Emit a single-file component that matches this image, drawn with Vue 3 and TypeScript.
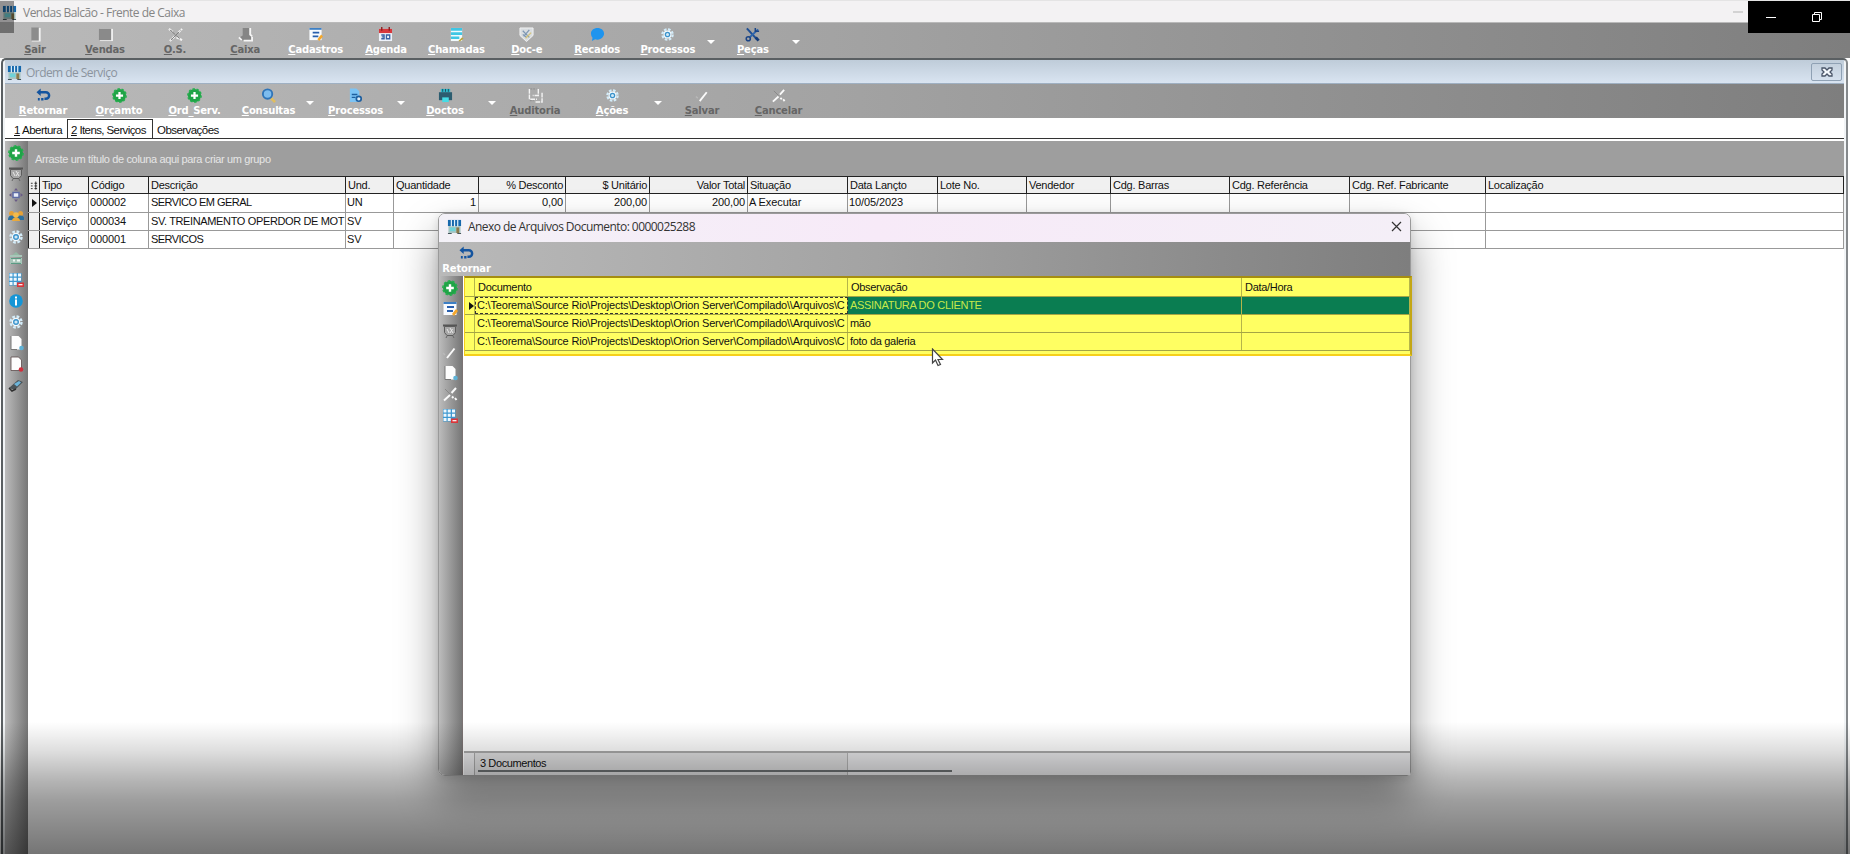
<template>
  <div class="screen">
    <svg class="sprite" width="0" height="0">
      <symbol id="i-shop" viewBox="0 0 16 16">
        <path d="M1.500 7h13v8h-13z" fill="#a9c4c2" />
        <path d="M3 9h6v4H3z" fill="#6fd3d8" />
        <path d="M10 9h3v6h-3z" fill="#8a7a4c" />
        <path d="M1 1h14v6.500H1z" fill="#1668ac" />
        <path d="M4 1h1.300v7H4zM7.400 1h1.300v7H7.400zM10.800 1h1.300v7h-1.300z" fill="#e2f1fa" />
        <path d="M1 15.500h4M11 15.500h4" stroke="#33424a" />
      </symbol>
      <symbol id="i-door" viewBox="0 0 16 16">
        <path d="M4 1h9.500v14.500H4z" fill="#f1f1f1" />
        <path d="M3.500 .5h8v14h-8z" fill="#8c8c8c" />
      </symbol>
      <symbol id="i-box" viewBox="0 0 16 16">
        <path d="M2 2h14v13H2z" fill="#eee" />
        <path d="M1 2h13v12H1z" fill="#8a8a8a" />
      </symbol>
      <symbol id="i-tools-off" viewBox="0 0 16 16">
        <path d="M2 15L9 8M11 6l4-4M1 2l4 3M9 11l6 3" stroke="#f4f4f4" stroke-width="2.200" fill="none" stroke-dasharray="3 1" />
        <path d="M3 14L12 5M2 3l10 9" stroke="#777" stroke-width="1" />
      </symbol>
      <symbol id="i-cash-off" viewBox="0 0 16 16">
        <path d="M5 1h8v6l2 2v5H2v-3l3-2z" fill="#858585" />
        <path d="M13 1v7l2 2M1 11l3 3M6 14.500h9v-4" stroke="#f5f5f5" stroke-width="2" fill="none" />
      </symbol>
      <symbol id="i-card" viewBox="0 0 16 16">
        <path d="M1.500 1h13v13h-13z" fill="#f8fbff" />
        <path d="M1.500 1h13v2h-13z" fill="#3d7fc4" />
        <path d="M5 6h7M5 10h6" stroke="#285fae" stroke-width="2" />
        <path d="M10 13l4-5 2 2-4 5z" fill="#f4a72c" />
      </symbol>
      <symbol id="i-calendar" viewBox="0 0 16 16">
        <path d="M1 2h14v13H1z" fill="#eef3fb" />
        <path d="M1 2h14v4.500H1z" fill="#d8373c" />
        <path d="M4 0v4M12 0v4" stroke="#8f2020" stroke-width="1.500" />
        <path d="M3.500 8.500h3v4h-3M4 10.500h2M9 8.500h3.500v4H9z" stroke="#3a62a5" stroke-width="1.400" fill="none" />
      </symbol>
      <symbol id="i-list" viewBox="0 0 16 16">
        <path d="M2 1h12v14H2z" fill="#f1fafc" />
        <path d="M2 2.500h12M2 7h12M2 11.500h9" stroke="#3fc6e4" stroke-width="2.800" />
        <path d="M10 15l4-4 1.500 1.500-4 3z" fill="#b9a53d" />
      </symbol>
      <symbol id="i-doce" viewBox="0 0 16 16">
        <path d="M1 1h14v8l-7 6.500L1 9z" fill="#d9dde0" stroke="#f2f2f2" />
        <path d="M4 4l7 7M11 3L5 10M4 8l4 3" stroke="#7d97b3" stroke-width="1.300" />
        <path d="M7 12l6-6" stroke="#d4c47c" stroke-width="1.500" />
      </symbol>
      <symbol id="i-chat" viewBox="0 0 16 16">
        <path d="M8 1c4 0 7 2.500 7 6s-3 6.500-7 6.500q-1.500 0-2.500-.4L2 15l.7-3.500Q1 9.500 1 7c0-3.500 3-6 7-6z" fill="#1e94ee" />
      </symbol>
      <symbol id="i-gear" viewBox="0 0 16 16">
        <circle cx="8" cy="8" r="5.500" fill="none" stroke="#d3ecf9" stroke-width="2.400" stroke-dasharray="2.700 1.600" />
        <circle cx="8" cy="8" r="4.200" fill="#f6fbfe" />
        <circle cx="8" cy="8" r="2.300" fill="#cfe9f7" stroke="#3b93cc" stroke-width="1.400" />
      </symbol>
      <symbol id="i-wrench" viewBox="0 0 16 16">
        <path d="M2 1.500l11 12" stroke="#1f4f94" stroke-width="2.200" />
        <path d="M14 2.500L4.500 11.500" stroke="#2f66ad" stroke-width="2" />
        <circle cx="3.500" cy="12.500" r="2.200" fill="none" stroke="#1b4485" stroke-width="1.600" />
        <path d="M11 1v3.500h4" stroke="#1b4485" stroke-width="1.600" fill="none" />
        <path d="M11.500 11l3 3.500" stroke="#123a78" stroke-width="3" />
      </symbol>
      <symbol id="i-back" viewBox="0 0 16 16">
        <path d="M3 4.500h7.500a3.500 3.500 0 0 1 0 7H9" stroke="#14549f" stroke-width="2.600" fill="none" />
        <path d="M.5 4.500L5 .5v8z" fill="#14549f" />
        <path d="M2 12h2M5.500 12H8" stroke="#14549f" stroke-width="2.600" />
      </symbol>
      <symbol id="i-plus" viewBox="0 0 16 16">
        <circle cx="8" cy="8" r="7" fill="#1fa447" />
        <circle cx="8" cy="8" r="7.200" fill="none" stroke="#25b04e" stroke-width="1.400" stroke-dasharray="2.500 2" />
        <path d="M8 4.200v7.600M4.200 8h7.600" stroke="#fff" stroke-width="2.400" />
      </symbol>
      <symbol id="i-search" viewBox="0 0 16 16">
        <path d="M10.500 10.500l4.500 4.500" stroke="#e0bd5e" stroke-width="2.800" />
        <circle cx="7" cy="6.500" r="5" fill="#7dbcee" stroke="#2f74b8" stroke-width="2" />
      </symbol>
      <symbol id="i-docgear" viewBox="0 0 16 16">
        <path d="M2 .5h7l3 3v11.500H2z" fill="#7cc3f4" />
        <path d="M4 7h6M4 10h4" stroke="#1e5f9f" stroke-width="1.500" />
        <circle cx="11.500" cy="11.500" r="2.600" fill="#d9ecfa" stroke="#1e5f9f" stroke-width="1.800" />
      </symbol>
      <symbol id="i-printer" viewBox="0 0 16 16">
        <path d="M3 1h10v4H3z" fill="#2fb7c9" />
        <path d="M1 4.500h14v8.500H1z" fill="#2c5d70" />
        <path d="M4.500 10h7v5h-7z" fill="#45dce6" />
        <path d="M5 1v3M8 1v3M11 1v3" stroke="#174b5c" />
      </symbol>
      <symbol id="i-audit" viewBox="0 0 16 16">
        <path d="M1.500 1v11h8M11 1v7H5M15 5v10H7" stroke="#f3f3f3" stroke-width="1.500" fill="none" stroke-dasharray="5 1" />
        <path d="M2.500 1H9M2 13.500h4" stroke="#8c8c8c" stroke-dasharray="2 1" />
      </symbol>
      <symbol id="i-check" viewBox="0 0 16 16">
        <path d="M5 14L12.500 4.500" stroke="#fafafa" stroke-width="2" />
        <path d="M1 9l2 2" stroke="#b9b9b9" stroke-width="1.500" />
      </symbol>
      <symbol id="i-cancel" viewBox="0 0 16 16">
        <path d="M2 14.500L8 9M9.500 7L14 2M10 10.500l1.500 1.500M13 12l1.500 2" stroke="#fafafa" stroke-width="2" />
        <path d="M3 3l5 5" stroke="#888" />
      </symbol>
      <symbol id="i-easel" viewBox="0 0 16 16">
        <path d="M1 2.500h14" stroke="#555" stroke-width="2" />
        <path d="M2.500 3.500h11v6l-2.500 3H5l-2.500-3z" fill="#a7a7a7" stroke="#5c5c5c" />
        <path d="M5 6l2 4M8 5l3 5M10.500 6L8 10" stroke="#e8e8e8" />
        <path d="M5 13l-1 2M11 13l1 2" stroke="#666" />
      </symbol>
      <symbol id="i-move" viewBox="0 0 16 16">
        <path d="M5 5.500h6v5H5z" fill="#e8eef8" stroke="#5d6ba5" stroke-width="1.500" />
        <path d="M8 1l2 2.500H6zM8 15l2-2.500H6zM1 8l2.500-2v4zM15 8l-2.500-2v4z" fill="#6a5a86" />
      </symbol>
      <symbol id="i-people" viewBox="0 0 16 16">
        <circle cx="3.500" cy="5.500" r="2.500" fill="#e5a136" />
        <circle cx="12.500" cy="5.500" r="2.500" fill="#e5a136" />
        <path d="M0 12q0-4.500 3.500-4.500T8 12zM8 12q0-4.500 4.500-4.500T16 12z" fill="#2c6f9e" />
        <circle cx="8" cy="7" r="2.800" fill="#f3bb4b" />
        <path d="M4 13q0-3.500 4-3.500t4 3.500z" fill="#e9a93c" />
      </symbol>
      <symbol id="i-calc" viewBox="0 0 16 16">
        <path d="M2 7l6-5 6 5z" fill="#93b9a4" />
        <path d="M2 5h12v2H2zM2 8h12v6H2z" fill="#a8c6b9" />
        <path d="M3 8.500h10M3 13.500h10" stroke="#5a9b84" />
        <path d="M5 10.500h2M9 10.500h3" stroke="#eff8f4" stroke-width="2" />
      </symbol>
      <symbol id="i-grid" viewBox="0 0 16 16">
        <path d="M1 1h12.500v12.500H1z" fill="#3d98d0" />
        <path d="M1.500 1.500h3v3h-3zM5.700 1.500h3v3h-3zM10 1.500h3v3h-3zM1.500 5.700h3v3h-3zM5.700 5.700h3v3h-3zM10 5.700h3v3h-3zM1.500 10h3v3h-3zM5.700 10h3v3h-3z" fill="#eff8fd" />
        <path d="M9 10.500h7v4.500H9z" fill="#d9353a" />
        <path d="M10.500 12.700h4" stroke="#fff" stroke-width="1.200" />
      </symbol>
      <symbol id="i-info" viewBox="0 0 16 16">
        <circle cx="8" cy="8" r="6.800" fill="#1595d6" />
        <path d="M8 3.500v2M8 6.500v6" stroke="#fff" stroke-width="2" />
      </symbol>
      <symbol id="i-doc" viewBox="0 0 16 16">
        <path d="M3 1h7.500l3 3v10.500H3z" fill="#fdfdfd" />
        <path d="M3 1v13.500h6" stroke="#777" fill="none" />
        <circle cx="13.500" cy="13" r="2.300" fill="#5fb2d6" />
      </symbol>
      <symbol id="i-docdel" viewBox="0 0 16 16">
        <path d="M3 1h7.500l3 3v10.500H3z" fill="#fdfdfd" stroke="#5a4a4a" stroke-width=".8" />
        <circle cx="13" cy="13.500" r="2.300" fill="#cf2f3c" />
      </symbol>
      <symbol id="i-stamp" viewBox="0 0 16 16">
        <path d="M1 11l9-8 5 2-8 8z" fill="#4b5459" />
        <path d="M6 7l5-3 2 1.500-4 4z" fill="#6cb5da" />
        <path d="M1 11l3 3 4-2" stroke="#303030" stroke-width="1.500" fill="none" />
      </symbol>
    </svg>

    <header class="app-title">
      <svg class="ico app-ico"><use href="#i-shop" /></svg>
      <span class="caption">Vendas Balcão - Frente de Caixa</span>
      <span class="faint-min"></span>
    </header>

    <nav class="toolbar main-bar">
      <template v-for="item in mainItems" :key="item.label">
        <div class="tool" :class="{ off: item.off }" :style="{ width: item.width + 'px' }">
          <svg class="ico"><use :href="'#i-' + item.icon" /></svg>
          <span class="tool-label"><u>{{ item.label.charAt(0) }}</u>{{ item.label.slice(1) }}</span>
        </div>
        <div v-if="item.arrow" class="drop" :style="{ width: item.arrow + 'px' }"><i></i></div>
      </template>
    </nav>

    <section class="child">
      <header class="child-title">
        <svg class="ico"><use href="#i-shop" /></svg>
        <span class="caption">Ordem de Serviço</span>
        <span class="child-close">
          <svg width="12" height="10" viewBox="0 0 12 10">
            <path d="M1 1h3l2 2 2-2h3v2L9 5l2 2v2H8L6 7 4 9H1V7l2-2-2-2z" fill="#f4f8fc" stroke="#4a5568" stroke-width="1.300" />
          </svg>
        </span>
      </header>

      <nav class="toolbar child-bar">
        <template v-for="item in childItems" :key="item.label">
          <div class="tool" :class="{ off: item.off }" :style="{ width: item.width + 'px' }">
            <svg class="ico"><use :href="'#i-' + item.icon" /></svg>
            <span class="tool-label"><u>{{ item.label.charAt(0) }}</u>{{ item.label.slice(1) }}</span>
          </div>
          <div v-if="item.arrow" class="drop" :style="{ width: item.arrow + 'px' }"><i></i></div>
        </template>
      </nav>

      <div class="tabs">
        <span class="tab first"><u>1</u> Abertura</span>
        <span class="tab active"><u>2</u> Itens, Serviços</span>
        <span class="tab last">Observações</span>
      </div>

      <div class="body">
        <aside class="side">
          <svg v-for="(name, i) in sideIcons" :key="i" class="ico"><use :href="'#i-' + name" /></svg>
        </aside>
        <div class="work">
          <div class="group-panel">Arraste um título de coluna aqui para criar um grupo</div>
          <div class="row head">
            <div class="cell mark">
              <svg width="9" height="9" viewBox="0 0 9 9"><path d="M1 2h2M1 5h2M1 8h2M5 2h3M5 5h3M5 8h3M6.500 0v9" stroke="#222" /></svg>
            </div>
            <div
              v-for="col in columns"
              :key="col.title"
              class="cell"
              :class="{ right: col.right && col.title !== 'Quantidade', grow: !col.width }"
              :style="col.width ? { width: col.width + 'px' } : {}"
            >{{ col.title }}</div>
          </div>
          <div v-for="(row, r) in rows" :key="r" class="row" :class="{ current: r === 0 }">
            <div class="cell mark"><i v-if="r === 0" class="pointer"></i></div>
            <div
              v-for="(col, c) in columns"
              :key="col.title"
              class="cell"
              :class="{ right: col.right, grow: !col.width, caps: c === 2, long: c === 2 && r === 1 }"
              :style="col.width ? { width: col.width + 'px' } : {}"
            >{{ row[c] }}</div>
          </div>
        </div>
      </div>
    </section>

    <div class="dialog">
      <header class="dialog-title">
        <svg class="ico"><use href="#i-shop" /></svg>
        <span class="caption">Anexo de Arquivos Documento: 0000025288</span>
        <svg class="dialog-close" width="11" height="11" viewBox="0 0 11 11"><path d="M1 1l9 9M10 1l-9 9" stroke="#333" stroke-width="1.200" /></svg>
      </header>
      <nav class="toolbar dialog-bar">
        <div class="tool">
          <svg class="ico"><use href="#i-back" /></svg>
          <span class="tool-label">Retornar</span>
        </div>
      </nav>
      <div class="dialog-body">
        <aside class="side dialog-side">
          <svg v-for="(name, i) in dialogIcons" :key="i" class="ico"><use :href="'#i-' + name" /></svg>
        </aside>
        <div class="files">
          <div class="highlight">
            <div class="frow fhead">
              <div class="fmark"></div>
              <div class="fdoc">Documento</div>
              <div class="fobs">Observação</div>
              <div class="fdate">Data/Hora</div>
            </div>
            <div v-for="(file, i) in files" :key="i" class="frow" :class="{ selected: i === 0 }">
              <div class="fmark"><i v-if="i === 0" class="pointer"></i></div>
              <div class="fdoc path">{{ path }}</div>
              <div class="fobs">{{ file }}</div>
              <div class="fdate"></div>
            </div>
          </div>
          <div class="files-empty"></div>
          <footer class="files-foot">
            <div class="fmark"></div>
            <div class="total">3 Documentos</div>
            <i class="foot-line"></i>
          </footer>
        </div>
      </div>
    </div>

    <svg class="cursor" width="13" height="19" viewBox="0 0 13 19">
      <path d="M1.500 1v14l3-3 2.500 5.500 2.500-1L7 11.500h4.500z" fill="#fff" stroke="#444" stroke-width="1.200" />
    </svg>

    <div class="shade"></div>
    <div class="corner"></div>
    <div class="window-controls">
      <svg width="102" height="32" viewBox="0 0 102 32" fill="none" stroke="#fff">
        <path d="M18 16.500h10" />
        <path d="M64.500 13.500h7v7h-7zM66.500 13v-1.500h7v7H72" />
      </svg>
    </div>
  </div>
</template>

<script setup lang="ts">
interface ToolItem {
  label: string
  icon: string
  width: number
  off?: boolean
  arrow?: number
}

interface Column {
  title: string
  width?: number
  right?: boolean
}

const mainItems: ToolItem[] = [
  { label: 'Sair', icon: 'door', width: 70, off: true },
  { label: 'Vendas', icon: 'box', width: 70, off: true },
  { label: 'O.S.', icon: 'tools-off', width: 70, off: true },
  { label: 'Caixa', icon: 'cash-off', width: 70.4, off: true },
  { label: 'Cadastros', icon: 'card', width: 70.4 },
  { label: 'Agenda', icon: 'calendar', width: 70.4 },
  { label: 'Chamadas', icon: 'list', width: 70.4 },
  { label: 'Doc-e', icon: 'doce', width: 70.4 },
  { label: 'Recados', icon: 'chat', width: 70.4 },
  { label: 'Processos', icon: 'gear', width: 71, arrow: 15 },
  { label: 'Peças', icon: 'wrench', width: 69, arrow: 17 },
]

const childItems: ToolItem[] = [
  { label: 'Retornar', icon: 'back', width: 76 },
  { label: 'Orçamto', icon: 'plus', width: 76 },
  { label: 'Ord_Serv.', icon: 'plus', width: 75 },
  { label: 'Consultas', icon: 'search', width: 73, arrow: 10 },
  { label: 'Processos', icon: 'docgear', width: 81, arrow: 10 },
  { label: 'Doctos', icon: 'printer', width: 78, arrow: 15 },
  { label: 'Auditoria', icon: 'audit', width: 72, off: true },
  { label: 'Ações', icon: 'gear', width: 82, arrow: 10 },
  { label: 'Salvar', icon: 'check', width: 78, off: true },
  { label: 'Cancelar', icon: 'cancel', width: 75, off: true },
]

const sideIcons = ['plus', 'easel', 'move', 'people', 'gear', 'calc', 'grid', 'info', 'gear', 'doc', 'docdel', 'stamp']
const dialogIcons = ['plus', 'card', 'easel', 'check', 'doc', 'cancel', 'grid']

const columns: Column[] = [
  { title: 'Tipo', width: 49 },
  { title: 'Código', width: 60 },
  { title: 'Descrição', width: 197 },
  { title: 'Und.', width: 48 },
  { title: 'Quantidade', width: 85, right: true },
  { title: '% Desconto', width: 87, right: true },
  { title: '$ Unitário', width: 84, right: true },
  { title: 'Valor Total', width: 98, right: true },
  { title: 'Situação', width: 100 },
  { title: 'Data Lançto', width: 90 },
  { title: 'Lote No.', width: 89 },
  { title: 'Vendedor', width: 84 },
  { title: 'Cdg. Barras', width: 119 },
  { title: 'Cdg. Referência', width: 120 },
  { title: 'Cdg. Ref. Fabricante', width: 136 },
  { title: 'Localização' },
]

const rows: string[][] = [
  ['Serviço', '000002', 'SERVICO EM GERAL', 'UN', '1', '0,00', '200,00', '200,00', 'A Executar', '10/05/2023'],
  ['Serviço', '000034', 'SV. TREINAMENTO OPERDOR DE MOT', 'SV'],
  ['Serviço', '000001', 'SERVICOS', 'SV'],
]

const path = 'C:\\Teorema\\Source Rio\\Projects\\Desktop\\Orion Server\\Compilado\\\\Arquivos\\C'
const files = ['ASSINATURA DO CLIENTE', 'mão', 'foto da galeria']
</script>

<style>
body {
  margin: 0;
  overflow: hidden;
}
</style>

<style scoped>
.screen {
  position: relative;
  display: flex;
  flex-direction: column;
  width: 1850px;
  height: 854px;
  overflow: hidden;
  background: #fff;
  font-family: "Liberation Sans", Arial, sans-serif;
  font-size: 11px;
  color: #111;
}

.screen * {
  box-sizing: border-box;
}

.sprite {
  position: absolute;
}

.ico {
  width: 16px;
  height: 16px;
  flex: none;
  display: block;
}

.caption {
  font-family: "Open Sans", "Noto Sans", sans-serif;
  font-size: 12px;
  white-space: nowrap;
}

.app-title {
  display: flex;
  align-items: center;
  height: 23px;
  flex: none;
  padding: 1px 0 0 2px;
  background: #f3f2f3;
  border-top: 1px solid #e4e4e4;
  border-bottom: 1px solid #b9b9b9;
}

.app-ico {
  width: 15px;
  height: 15px;
}

.app-title .caption {
  margin-left: 6px;
  color: #858585;
  letter-spacing: -0.52px;
}

.faint-min {
  width: 10px;
  height: 2px;
  margin-left: auto;
  margin-right: 107px;
  background: #d3d3d3;
}

.toolbar {
  display: flex;
  flex: none;
  background: linear-gradient(90deg, #b9b9b9, #a3a3a3 45%, #7e7e7e);
}

.main-bar {
  height: 35px;
}

.tool {
  display: flex;
  flex-direction: column;
  align-items: center;
  flex: none;
  padding-top: 4px;
  color: #fff;
}

.tool .ico {
  width: 15px;
  height: 15px;
}

.tool-label {
  margin-top: 1px;
  font: bold 10px/13px "DejaVu Sans", Verdana, sans-serif;
  letter-spacing: -0.2px;
  white-space: nowrap;
}

.tool-label u {
  text-underline-offset: 1px;
}

.off {
  color: #656565;
}

.drop {
  display: flex;
  flex: none;
  align-items: center;
  justify-content: center;
  padding-top: 3px;
}

.drop i {
  flex: none;
  border: 4px solid transparent;
  border-top-color: #fff;
  border-bottom: 0;
}

.child {
  display: flex;
  flex: 1;
  flex-direction: column;
  border: 2px solid #5a5f62;
  border-bottom: 0;
  border-right-color: #85898c;
  margin: 0 2px 0 1px;
  padding: 0 2px;
  border-radius: 5px 5px 0 0;
  background: #f1f4f6;
}

.child-title {
  display: flex;
  align-items: center;
  flex: none;
  height: 24px;
  padding: 1px 0 0 2px;
  background: linear-gradient(#bfccd9, #d9e4f1);
  border-bottom: 1px solid #9fb0c2;
}

.child-title .ico,
.dialog-title .ico {
  width: 15px;
  height: 15px;
}

.child-title .caption {
  margin: 1px 0 0 4px;
  color: #8b949e;
  letter-spacing: -0.55px;
}

.child-close {
  display: flex;
  align-items: center;
  justify-content: center;
  width: 31px;
  height: 18px;
  margin-left: auto;
  margin-right: 2px;
  border: 1px solid #8fa1b4;
  border-radius: 2px;
}

.child-bar {
  height: 34px;
}

.tabs {
  display: flex;
  align-items: flex-end;
  flex: none;
  height: 21px;
  background: #fff;
  border-bottom: 1px solid #333;
}

.tab {
  height: 18px;
  line-height: 21px;
  font-size: 11.500px;
  letter-spacing: -0.5px;
  white-space: nowrap;
}

.first {
  padding-left: 9px;
  width: 62px;
}

.active {
  width: 86px;
  padding-left: 3px;
  border: 1px solid #333;
  border-bottom: 0;
  height: 19px;
  letter-spacing: -0.6px;
}

.last {
  padding-left: 4px;
  letter-spacing: -0.55px;
}

.body {
  display: flex;
  flex: 1;
  border-top: 2px solid #fff;
}

.side {
  display: flex;
  flex-direction: column;
  align-items: center;
  flex: none;
  width: 23px;
  gap: 5.100px;
  padding: 4px 2px 0 0;
  background: linear-gradient(90deg, #bcbcbc, #777);
}

.work {
  display: flex;
  flex: 1;
  flex-direction: column;
  min-width: 0;
  background: #fff;
}

.group-panel {
  height: 35px;
  padding-left: 7px;
  line-height: 37px;
  background: #9e9e9e;
  color: #e6e6e6;
  letter-spacing: -0.36px;
}

.row {
  display: flex;
  height: 18px;
  border-bottom: 1px solid #999;
}

.head {
  background: #f0f0f0;
  border-top: 1px solid #222;
  border-bottom: 1px solid #222;
}

.current {
  height: 19px;
}

.cell {
  flex: none;
  padding: 0 2px 0 1px;
  line-height: 17px;
  letter-spacing: -0.1px;
  border-right: 1px solid #999;
  white-space: nowrap;
  overflow: hidden;
}

.head .cell {
  border-right-color: #222;
  letter-spacing: -0.25px;
  padding-left: 2px;
  line-height: 16px;
}

.row .caps {
  padding-left: 2px;
  letter-spacing: -0.54px;
}

.row .long {
  padding-right: 0;
  letter-spacing: -0.36px;
}

.row .mark {
  display: flex;
  align-items: center;
  width: 12px;
  background: #f0f0f0;
  border-left: 1px solid #222;
  border-right-color: #222;
  padding: 0 1px;
}

.right {
  text-align: right;
}

.grow {
  flex: 1;
}

.pointer {
  margin-left: 2px;
  border: 4px solid transparent;
  border-left: 5px solid #111;
  border-right: 0;
}

.dialog {
  position: absolute;
  left: 438px;
  top: 213px;
  display: flex;
  flex-direction: column;
  width: 973px;
  height: 563px;
  border: 1px solid #9a9a9a;
  border-radius: 7px 7px 4px 7px;
  box-shadow: 0 22px 42px rgba(0, 0, 0, 0.4), 0 2px 8px rgba(0, 0, 0, 0.12);
}

.dialog-title {
  display: flex;
  align-items: center;
  flex: none;
  height: 28px;
  padding: 0 0 3px 8px;
  border-radius: 6px 6px 0 0;
  background: linear-gradient(90deg, #f3f1f7, #f7eaf8 45%, #f4eff7);
}

.dialog-title .caption {
  margin-left: 6px;
  color: #333;
  letter-spacing: -0.55px;
}

.dialog-close {
  margin-left: auto;
  margin-right: 8px;
}

.dialog-bar {
  height: 34px;
}

.dialog-bar .tool {
  width: 55px;
}

.dialog-body {
  display: flex;
  flex: 1;
  min-height: 0;
}

.dialog-side {
  width: 24px;
  gap: 5.300px;
  padding: 4px 2px 0 0;
  border-right: 1px solid #7c7474;
  border-radius: 0 0 0 6px;
}

.files {
  display: flex;
  flex: 1;
  flex-direction: column;
  background: #fff;
  margin-left: 1px;
}

.highlight {
  height: 80px;
  flex: none;
  margin-right: -2px;
  background: #ffff62;
  border: 2px solid #f5cf1b;
  border-top-color: #a58d10;
  border-right-color: #c4a715;
  border-left-width: 1px;
}

.frow {
  display: flex;
  height: 18px;
  border-bottom: 1px solid #a5a544;
}

.frow > div {
  flex: none;
  line-height: 17px;
  padding: 0 2px;
  border-right: 1px solid #b5b54a;
  letter-spacing: -0.3px;
  white-space: nowrap;
  overflow: hidden;
}

.frow > .fmark {
  display: flex;
  align-items: center;
  width: 10px;
}

.frow > .fdoc {
  width: 373px;
}

.frow > .path {
  padding-right: 0;
  letter-spacing: -0.19px;
}

.frow > .fobs {
  width: 394px;
}

.frow > .fdate {
  flex: 1;
}

.fhead {
  height: 19px;
}

.frow.fhead > div {
  padding-left: 3px;
  line-height: 19px;
}

.selected .fdoc {
  outline: 1px dashed #333;
  outline-offset: -1px;
}

.selected .fobs,
.selected .fdate {
  background: #0a7d51;
  color: #c6e84a;
}

.files-empty {
  flex: 1;
}

.files-foot {
  position: relative;
  display: flex;
  height: 24px;
  border-top: 2px solid #a9a9a9;
  background: #e9e9eb;
}

.files-foot .fmark {
  width: 11px;
  border-right: 1px solid #aaa;
}

.total {
  width: 373px;
  padding-left: 5px;
  line-height: 21px;
  letter-spacing: -0.4px;
  border-right: 1px solid #b5b5b5;
  background: #e0e0e1;
}

.foot-line {
  position: absolute;
  left: 14px;
  bottom: 3px;
  width: 474px;
  height: 2px;
  background: #6c7072;
}

.cursor {
  position: absolute;
  left: 931px;
  top: 348px;
}

/* dark fade behind the player controls */
.shade {
  position: absolute;
  left: 0;
  right: 0;
  bottom: 0;
  height: 132px;
  background: linear-gradient(rgba(0, 0, 0, 0), rgba(0, 0, 0, 0.13) 22%, rgba(0, 0, 0, 0.29) 44%, rgba(0, 0, 0, 0.38) 59%, rgba(0, 0, 0, 0.54));
}

.corner {
  position: absolute;
  left: 0;
  top: 1px;
  width: 14px;
  height: 32px;
  background: rgba(0, 0, 0, 0.4);
}

.window-controls {
  position: absolute;
  left: 1748px;
  top: 1px;
  width: 102px;
  height: 32px;
  background: #000;
}
</style>
